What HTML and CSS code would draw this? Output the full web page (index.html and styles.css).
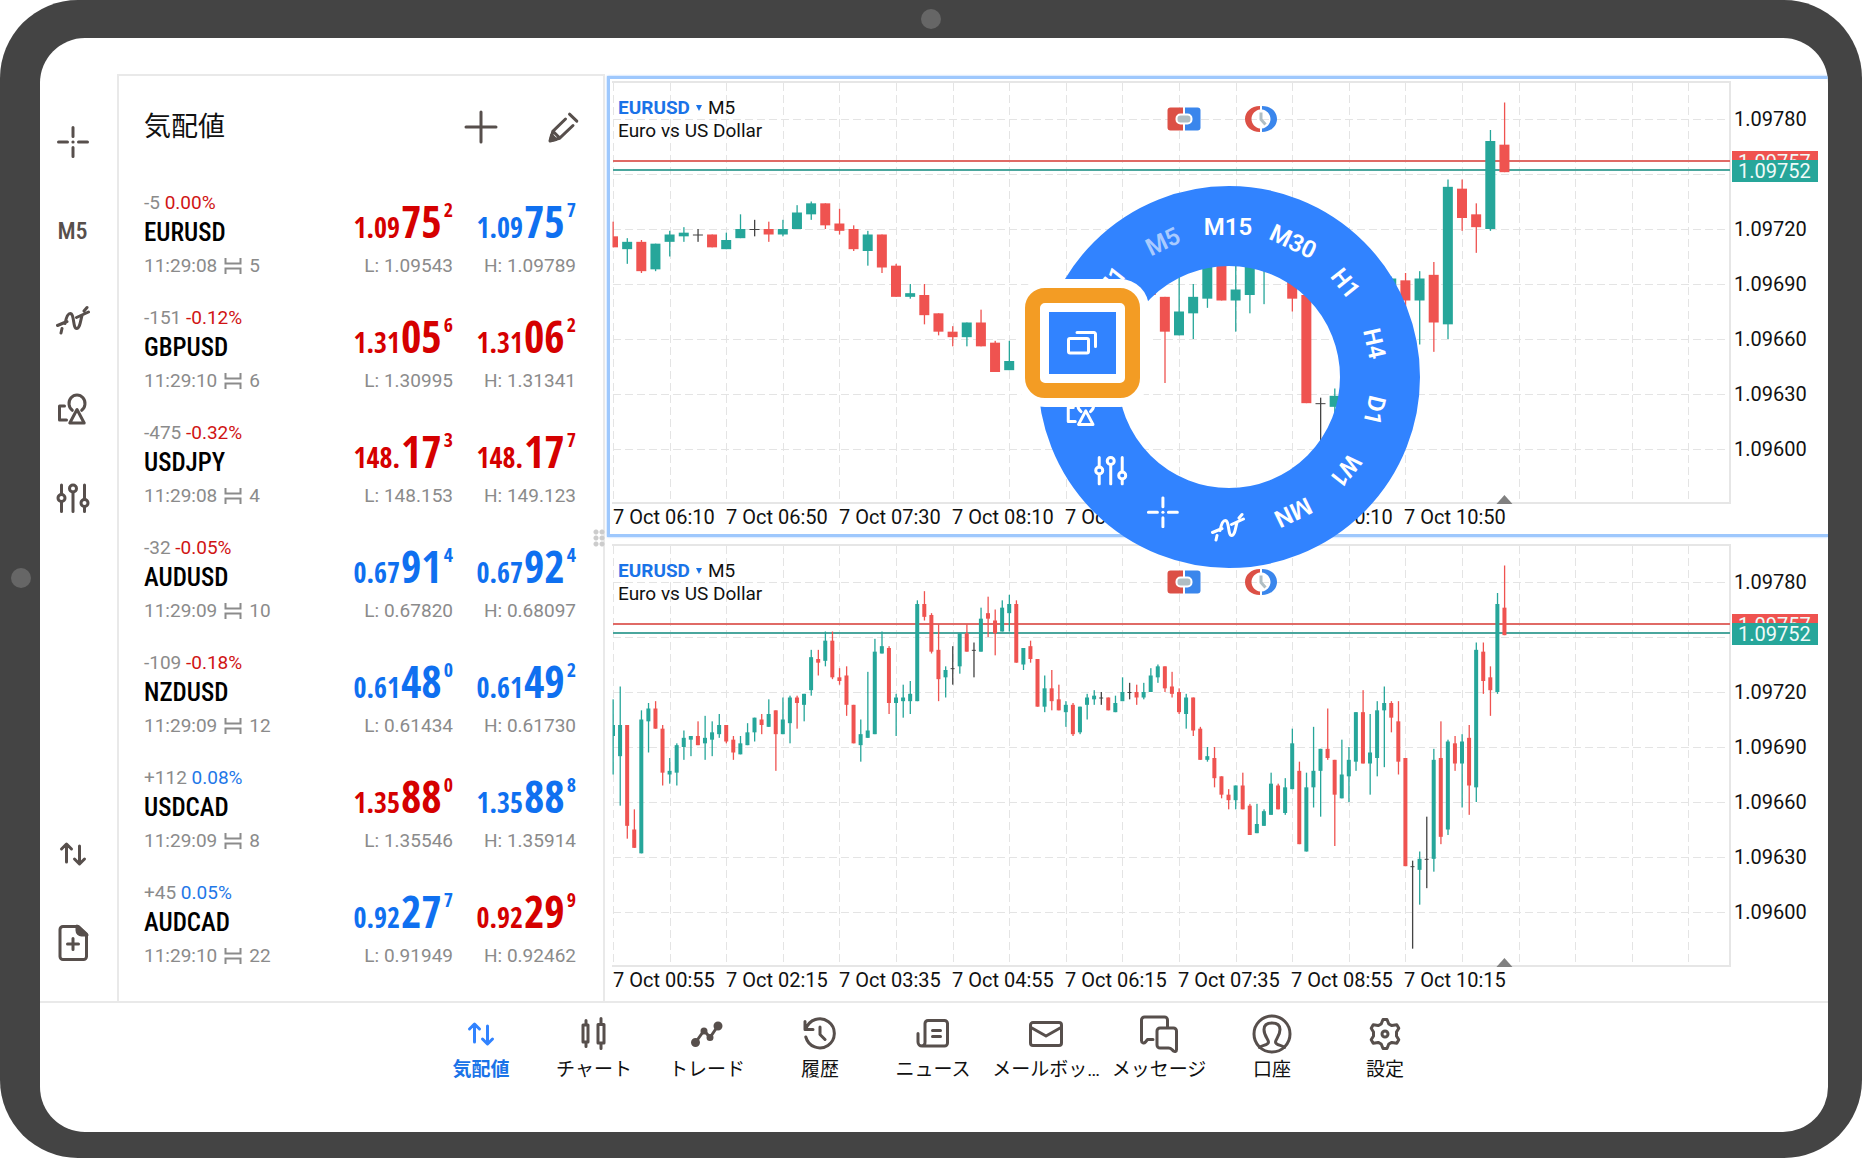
FILE: index.html
```html
<!DOCTYPE html>
<html lang="ja">
<head>
<meta charset="utf-8">
<meta name="viewport" content="width=device-width, initial-scale=1">
<title>気配値</title>
<link rel="stylesheet" href="styles.css">
</head>
<body>
<svg class="sprite" aria-hidden="true">
  <symbol id="i-cross" viewBox="0 0 32 32"><path d="M16 1.500v9M16 21.500v9M1.500 16h9M21.500 16h9"/><path d="M15.900 16h.2"/></symbol>
  <symbol id="i-wave" viewBox="0 0 34 30"><path d="M1.500 20.500 11 16.500M20.500 12.500 32.500 7M5 28l1-4.500M9 18.500C10.500 11 12 8.500 14.200 8.500c4.300 0 2.500 15 6.500 15 3.300 0 3.800-8 5.300-13M28 6l3-3.500"/></symbol>
  <symbol id="i-shapes" viewBox="0 0 32 32"><path d="M7.500 13H2.500v14h7M15.300 17.300a8 8.500 0 1 1 9.400 0M20 16.500 12.800 30h14.400z"/></symbol>
  <symbol id="i-sliders" viewBox="0 0 34 30"><path d="M5.500 2v9.500M5.500 18.500V28.500M17 9v19.500M28.500 2v14.500M28.500 23.500v5"/><circle cx="5.500" cy="15" r="3.500"/><circle cx="17" cy="5.500" r="3.500"/><circle cx="28.500" cy="20" r="3.500"/></symbol>
  <symbol id="i-updown" viewBox="0 0 28 26"><path d="M7.500 3.500v17.500M2.500 8l5-5 5 5M20.500 5v17.500M15.500 18l5 5 5-5"/></symbol>
  <symbol id="i-file" viewBox="0 0 32 38"><path d="M6 2.500h15.500l8 7.500v22.500a3 3 0 0 1-3 3H6a3 3 0 0 1-3-3v-27a3 3 0 0 1 3-3zM16 14.500v11M10.500 20h11"/><path class="solid" d="M20 2l10 9h-5.500a4.500 4.500 0 0 1-4.500-4.500z"/></symbol>
  <symbol id="i-plus" viewBox="0 0 34 34"><path d="M17 2v30M2 17h30"/></symbol>
  <symbol id="i-pencil" viewBox="0 0 32 32"><path d="M17.500 8 4.800 20.300 2.500 29.500l9.200-2.300L25 14.500M5 20.300l6.500 6.500M21.500 3.200l7.300 7"/><path class="solid" d="M2 30l1.600-6 4.500 4.500z"/></symbol>
  <symbol id="i-spread" viewBox="0 0 18 18"><path d="M1.500 1v5.500h15V1M1.500 17v-5.500h15V17"/></symbol>
  <symbol id="i-windows" viewBox="0 0 32 28"><path d="M4 9.500h17a1.500 1.500 0 0 1 1.500 1.500v11.500A1.500 1.500 0 0 1 21 24H4a1.500 1.500 0 0 1-1.500-1.500V11A1.500 1.500 0 0 1 4 9.500zM11 3.500h17A1.500 1.500 0 0 1 29.500 5v12.500"/></symbol>
  <symbol id="i-candles" viewBox="0 0 32 36"><path d="M5 9h5v17H5zM8 9V4.500M8 26v4.500M20 8.500h6V27h-6zM23 8.500V2.500M23 27v5.500"/></symbol>
  <symbol id="i-trade" viewBox="0 0 36 32"><path d="M6.500 24.500 15 12.500l6 7L29.500 7"/><circle class="solid" cx="6.500" cy="24.500" r="3"/><circle class="solid" cx="29" cy="8" r="3"/><circle class="solid" cx="15" cy="13" r="2"/><circle class="solid" cx="21" cy="19.500" r="2"/></symbol>
  <symbol id="i-history" viewBox="0 0 36 36"><path d="M4 13A14.500 14.500 0 1 1 3.800 21M3 5.500v8h8M18 11v7.500l5 5"/></symbol>
  <symbol id="i-news" viewBox="0 0 36 34"><path d="M13 3.500h16.500a3 3 0 0 1 3 3v19.500a3 3 0 0 1-3 3H7a4 4 0 0 1-4-4v-8.500M10 25V6.500a3 3 0 0 1 3-3M10 25a3.500 3.500 0 0 1-3.500 4M17.500 13.500h8M17.500 19.500h8"/></symbol>
  <symbol id="i-mail" viewBox="0 0 36 30"><path d="M5 3.500h26a2.500 2.500 0 0 1 2.500 2.500v18a2.500 2.500 0 0 1-2.500 2.500H5A2.500 2.500 0 0 1 2.500 24V6A2.500 2.500 0 0 1 5 3.500zM3 8.500l15 8.500 15-8.500"/></symbol>
  <symbol id="i-chat" viewBox="0 0 42 40"><path d="M15 25.500H9.500L7.500 28c-1.500 1.800-4 1.200-4-1.500V6a3 3 0 0 1 3-3h20a3 3 0 0 1 3 3v7M22 14h13.500a3 3 0 0 1 3 3v18.500c0 2-1.500 2.500-3 1.500-1.800-1.500-2.500-3-5-3H22a3 3 0 0 1-3-3V17a3 3 0 0 1 3-3z"/></symbol>
  <symbol id="i-account" viewBox="0 0 42 42"><circle cx="21" cy="21" r="18"/><path d="M8.500 34.500c2-2.500 9-2 9-5.500 0-2.500-4.500-6-4.500-12.500 0-5 3.500-6.500 8-6.500s8 1.500 8 6.500c0 6.500-4.500 10-4.500 12.500 0 3.500 7 3 9 5.500"/></symbol>
  <symbol id="i-gear" viewBox="0 0 34 36"><path d="M15 3.500h4l1.800 4.500 3 1.600 5-.8 2 3.400L28.500 16v4l2.300 3.800-2 3.400-5-.8-3 1.600L19 32.500h-4L13.200 28l-3-1.600-5 .8-2-3.400L5.500 20v-4l-2.300-3.800 2-3.400 5 .8 3-1.600z"/><circle cx="17" cy="18" r="3"/></symbol>
  <symbol id="i-order" viewBox="0 0 34 26"><path fill="#dc5046" d="M3.500 1.500H16v23H3.500a3 3 0 0 1-3-3v-17a3 3 0 0 1 3-3z"/><path fill="#3a86ec" d="M18 1.500h12.500a3 3 0 0 1 3 3v17a3 3 0 0 1-3 3H18z"/><rect x="9.500" y="8.500" width="15" height="9" rx="4" fill="#b0bec3" stroke="#fff" stroke-width="2"/></symbol>
  <symbol id="i-clock" viewBox="0 0 34 28"><path fill="#dc5046" d="M16 1C7 1 1 7 1 14s6 13 15 13v-3.500C11.500 23 7.500 19 7.500 14S11.500 5 16 4.500z"/><path fill="#3a86ec" d="M18 1c9 0 15 6 15 13s-6 13-15 13v-3.500c4.500-.5 8.500-4.500 8.500-9.500S22.500 5 18 4.500z"/><path fill="none" stroke="#b0bec3" stroke-width="3" d="M17 7.500v7l4.500 5"/></symbol>
</svg>

<div class="tablet">
  <i class="camera camera-top"></i>
  <i class="camera camera-side"></i>
  <div class="screen">
    <div class="workspace">
      <nav class="rail" aria-label="ツール">
        <button aria-label="十字カーソル"><svg class="ico w32 h32"><use href="#i-cross"/></svg></button>
        <button>M5</button>
        <button aria-label="インディケータ"><svg class="ico w34 h30"><use href="#i-wave"/></svg></button>
        <button aria-label="オブジェクト"><svg class="ico w32 h32"><use href="#i-shapes"/></svg></button>
        <button aria-label="チャート設定"><svg class="ico w34 h30"><use href="#i-sliders"/></svg></button>
        <button class="push" aria-label="気配値"><svg class="ico w28 h26"><use href="#i-updown"/></svg></button>
        <button aria-label="新規注文"><svg class="ico w32 h38"><use href="#i-file"/></svg></button>
      </nav>

      <section class="watch">
        <header class="watch-head">
          <h1>気配値</h1>
          <button aria-label="追加"><svg class="ico w34 h34"><use href="#i-plus"/></svg></button>
          <button aria-label="編集"><svg class="ico w32 h32"><use href="#i-pencil"/></svg></button>
        </header>
        <ul class="quotes" id="quotes"></ul>
        <i class="grip"></i>
      </section>

      <div class="charts">
        <section class="chart selected" data-from="63" data-step="4" data-body="10">
          <div class="plot">
            <svg class="canvas"></svg>
            <div class="legend"><a href="#symbol">EURUSD</a><i class="caret"></i>M5<br>Euro vs US Dollar</div>
            <div class="quick">
              <button aria-label="注文"><svg class="w34 h26"><use href="#i-order"/></svg></button>
              <button aria-label="時間"><svg class="w34 h28"><use href="#i-clock"/></svg></button>
            </div>
          </div>
          <ol class="prices"><li>1.09780</li><li><span class="tag ask">1.09757</span><span class="tag bid">1.09752</span></li><li>1.09720</li><li>1.09690</li><li>1.09660</li><li>1.09630</li><li>1.09600</li></ol>
          <ol class="times"><li>7 Oct 06:10</li><li>7 Oct 06:50</li><li>7 Oct 07:30</li><li>7 Oct 08:10</li><li>7 Oct 08:50</li><li>7 Oct 09:30</li><li>7 Oct 10:10</li><li>7 Oct 10:50</li></ol>
        </section>
        <section class="chart" data-from="0" data-step="8" data-body="4">
          <div class="plot">
            <svg class="canvas"></svg>
            <div class="legend"><a href="#symbol">EURUSD</a><i class="caret"></i>M5<br>Euro vs US Dollar</div>
            <div class="quick">
              <button aria-label="注文"><svg class="w34 h26"><use href="#i-order"/></svg></button>
              <button aria-label="時間"><svg class="w34 h28"><use href="#i-clock"/></svg></button>
            </div>
          </div>
          <ol class="prices"><li>1.09780</li><li><span class="tag ask">1.09757</span><span class="tag bid">1.09752</span></li><li>1.09720</li><li>1.09690</li><li>1.09660</li><li>1.09630</li><li>1.09600</li></ol>
          <ol class="times"><li>7 Oct 00:55</li><li>7 Oct 02:15</li><li>7 Oct 03:35</li><li>7 Oct 04:55</li><li>7 Oct 06:15</li><li>7 Oct 07:35</li><li>7 Oct 08:55</li><li>7 Oct 10:15</li></ol>
        </section>

        <div class="radial" id="radial"></div>
        <div class="spotlight"><button aria-label="ウィンドウ"><svg class="ico w32 h28"><use href="#i-windows"/></svg></button></div>
      </div>
    </div>

    <nav class="tabs">
      <a href="#quotes" class="active"><span><svg class="ico w28 h26"><use href="#i-updown"/></svg></span>気配値</a>
      <a href="#chart"><span><svg class="ico w32 h36"><use href="#i-candles"/></svg></span>チャート</a>
      <a href="#trade"><span><svg class="ico w36 h32"><use href="#i-trade"/></svg></span>トレード</a>
      <a href="#history"><span><svg class="ico w36 h36"><use href="#i-history"/></svg></span>履歴</a>
      <a href="#news"><span><svg class="ico w36 h34"><use href="#i-news"/></svg></span>ニュース</a>
      <a href="#mail"><span><svg class="ico w36 h30"><use href="#i-mail"/></svg></span>メールボッ…</a>
      <a href="#chat"><span><svg class="ico w42 h40"><use href="#i-chat"/></svg></span>メッセージ</a>
      <a href="#account"><span><svg class="ico w42 h42"><use href="#i-account"/></svg></span>口座</a>
      <a href="#settings"><span><svg class="ico w34 h36"><use href="#i-gear"/></svg></span>設定</a>
    </nav>
  </div>
</div>
<script src="app.js"></script>
</body>
</html>
```
FILE: styles.css
```css
* { box-sizing: border-box; }
body {
  margin: 0;
  background: #fff;
  color: #111;
  font: 400 19px/24px Roboto, "Noto Sans CJK JP", sans-serif;
}
button {
  display: flex;
  align-items: center;
  justify-content: center;
  padding: 0;
  border: 0;
  background: none;
  color: inherit;
  font: inherit;
  cursor: pointer;
}
a { color: inherit; text-decoration: none; }
ul, ol { margin: 0; padding: 0; list-style: none; }
svg { display: block; flex: none; }
.sprite { position: absolute; width: 0; height: 0; }
.ico { fill: none; stroke: currentColor; stroke-width: 3; stroke-linecap: round; stroke-linejoin: round; }
.solid { fill: currentColor; }
.w28 { width: 28px; } .w32 { width: 32px; } .w34 { width: 34px; } .w36 { width: 36px; } .w42 { width: 42px; }
.h26 { height: 26px; } .h28 { height: 28px; } .h30 { height: 30px; } .h32 { height: 32px; } .h34 { height: 34px; }
.h36 { height: 36px; } .h38 { height: 38px; } .h40 { height: 40px; } .h42 { height: 42px; }

/* device */
.tablet {
  position: relative;
  display: flex;
  min-height: 100vh;
  padding: 38px 34px 26px 40px;
  border-radius: 78px;
  background: #444;
}
.camera { position: absolute; width: 20px; height: 20px; border-radius: 50%; background: #666; }
.camera-top { top: 9px; left: calc(50% - 10px); }
.camera-side { left: 11px; top: calc(50% - 11px); }
.screen {
  flex: 1;
  min-width: 0;
  display: flex;
  flex-direction: column;
  padding-top: 36px;
  border-radius: 45px;
  background: #fff;
  overflow: hidden;
}
.workspace { flex: 1; display: flex; }

/* left tool rail */
.rail {
  width: 77px;
  display: flex;
  flex-direction: column;
  padding: 23px 12px 14px 0;
  color: #574f4c;
  font-weight: 500;
  font-size: 24px;
  font-family: "Roboto Condensed", Roboto, sans-serif;
}
.rail button { height: 89px; }
.rail .push { margin-top: auto; }

/* quotes */
.watch {
  position: relative;
  width: 488px;
  border: solid #e9e9e9;
  border-width: 2px 2px 0;
  padding: 0 27px 18px 25px;
}
.watch-head { display: flex; align-items: center; height: 102px; color: #574f4c; }
.watch-head h1 { flex: 1; margin: 0; color: #111; font-size: 27px; font-weight: 400; }
.watch-head button { width: 34px; height: 34px; }
.watch-head button + button { width: 32px; margin-left: 50px; margin-right: -4px; }
.quote {
  display: flex;
  height: 115px;
  padding-top: 13px;
  color: #8b8b8b;
}
.quote-main { flex: 1; }
.quote-main b {
  display: block;
  color: #000;
  font: 500 25px/36px "Roboto Condensed", Roboto, sans-serif;
}
.meta { display: flex; align-items: center; gap: 7px; height: 30px; }
.meta .ico { width: 18px; height: 18px; stroke-width: 2; stroke-linecap: butt; stroke-linejoin: miter; }
.side { width: 123px; text-align: right; line-height: 30px; }
.price {
  height: 60px;
  line-height: 60px;
  font-family: "Open Sans Condensed", "Roboto Condensed", sans-serif;
  font-weight: 700;
  font-size: 28px;
  white-space: nowrap;
}
.price b { font-size: 44px; margin: 0 2px 0 1px; }
.price sup { font-size: 20px; line-height: 0; vertical-align: 21px; }
.down { color: #d50000; }
.up { color: #0f70f0; }
.quote-main .down { color: #d01414; }
.quote-main .up { color: #1f78e8; }
.grip {
  position: absolute;
  right: -2px;
  top: 453px;
  width: 12px;
  height: 18px;
  background: radial-gradient(circle at center, #ccc 2px, transparent 3px) 0 0 / 6px 6px;
}

/* charts */
.charts { position: relative; flex: 1; min-width: 0; padding: 2px 0 0 2px; }
.chart {
  display: grid;
  grid-template-columns: minmax(0, 1fr) 97px;
  padding: 2px 0 0 2px;
  border: 3px solid transparent;
  border-right: 0;
}
.chart.selected { border-color: #9ec8fd; box-shadow: 0 0 2px #9ec8fd; margin-bottom: 2px; }
.plot { position: relative; border: 2px solid #e6e6e6; border-left: 0; height: 423px; }
.canvas { width: 100%; height: 100%; overflow: visible; }
.grid { stroke: #e4e4e4; stroke-width: 1; stroke-dasharray: 8 4; }
.legend { position: absolute; left: 6px; top: 13px; line-height: 23px; }
.legend a { color: #1a73e8; font-weight: 700; }
.caret {
  display: inline-block;
  margin: 0 6px 3px;
  border: solid transparent;
  border-width: 6px 3px 0;
  border-top-color: #1a73e8;
}
.quick { position: absolute; left: 555px; top: 22px; display: flex; align-items: center; gap: 43px; }
.prices { padding-top: 11px; font-size: 20px; }
.prices li { position: relative; height: 55px; line-height: 55px; padding-left: 3px; }
.tag {
  position: absolute;
  left: 1px;
  width: 86px;
  padding-left: 6px;
  line-height: 22px;
  color: #effaf8;
}
.ask { top: 4px; background: #ef5350; }
.bid { top: 13px; background: #26a69a; }
.times { grid-column: 1 / 3; display: flex; height: 30px; line-height: 27px; font-size: 20px; padding-left: 1px; }
.times li { flex: 0 0 113px; white-space: nowrap; }

/* radial timeframe menu */
.radial {
  position: absolute;
  left: 433px;
  top: 112px;
  width: 382px;
  height: 382px;
  border: 80px solid #3183ff;
  border-radius: 50%;
  color: #fff;
  font-size: 24px;
  font-weight: 600;
}
.radial button {
  position: absolute;
  left: 50%;
  top: 50%;
  width: 60px;
  height: 40px;
  margin: -20px 0 0 -31px;
}
.radial .current { color: #a9cbff; }
.spotlight {
  position: absolute;
  left: 420px;
  top: 214px;
  width: 115px;
  height: 110px;
  padding: 9px;
  border: 15px solid #f39c24;
  border-radius: 20px;
  background: #fff;
  box-shadow: 0 0 0 9px #fff;
}
.spotlight button { width: 100%; height: 100%; background: #3183ff; color: #fff; }
.spotlight .ico { margin-right: 2px; }

/* bottom tabs */
.tabs {
  display: flex;
  justify-content: center;
  height: 131px;
  padding: 9px 2px 0 0;
  border-top: 2px solid #e9e9e9;
}
.tabs a { width: 113px; text-align: center; white-space: nowrap; }
.tabs span { display: flex; align-items: center; justify-content: center; height: 44px; margin-bottom: 2px; color: #574f4c; }
.tabs .active { color: #1a73e8; font-weight: 700; }
.tabs .active span { color: #3183ff; }
```
FILE: app.js
```js
// Quotes: symbol, change, percent, time, spread, bid, ask, low, high, bid/ask direction
const quotes = [
  ["EURUSD", "-5", "0.00%", "11:29:08", 5, "1.09752", "1.09757", "1.09543", "1.09789", "du", "d"],
  ["GBPUSD", "-151", "-0.12%", "11:29:10", 6, "1.31056", "1.31062", "1.30995", "1.31341", "dd", "d"],
  ["USDJPY", "-475", "-0.32%", "11:29:08", 4, "148.173", "148.177", "148.153", "149.123", "dd", "d"],
  ["AUDUSD", "-32", "-0.05%", "11:29:09", 10, "0.67914", "0.67924", "0.67820", "0.68097", "uu", "d"],
  ["NZDUSD", "-109", "-0.18%", "11:29:09", 12, "0.61480", "0.61492", "0.61434", "0.61730", "uu", "d"],
  ["USDCAD", "+112", "0.08%", "11:29:09", 8, "1.35880", "1.35888", "1.35546", "1.35914", "du", "u"],
  ["AUDCAD", "+45", "0.05%", "11:29:10", 22, "0.92277", "0.92299", "0.91949", "0.92462", "ud", "u"]
];
const dir = d => (d === "u" ? "up" : "down");
const price = (p, d) =>
  `<div class="price ${dir(d)}">${p.slice(0, 4)}<b>${p.slice(4, 6)}</b><sup>${p.slice(6)}</sup></div>`;
document.getElementById("quotes").innerHTML = quotes.map(q => `
  <li class="quote">
    <div class="quote-main">${q[1]} <span class="${dir(q[10])}">${q[2]}</span><b>${q[0]}</b>
      <div class="meta">${q[3]}<svg class="ico"><use href="#i-spread"/></svg>${q[4]}</div></div>
    <div class="side">${price(q[5], q[9][0])}L: ${q[7]}</div>
    <div class="side">${price(q[6], q[9][1])}H: ${q[8]}</div>
  </li>`).join("");

// Five-minute bars: type (g up, r down, d doji), high, body top, body bottom, low; points above 1.09000
const bars = `g716 702 696 675,g723 702 685 658,r702 702 647 640,r656 645 635 635,g710 705 632 632,g714 711 704 687,
r715 711 700 700,r702 700 676 669,g684 677 675 670,g692 691 676 669,g699 695 690 683,g696 696 694 685,r704 696 691 691,
g707 695 692 683,g704 698 694 685,g708 702 697 695,r702 702 693 692,r696 694 687 683,g696 692 686 686,g703 698 691 691,
g706 706 698 693,r708 705 702 697,g716 708 701 701,r710 710 697 677,g717 705 697 697,g718 717 703 692,r718 717 714 700,
g719 719 713 704,g743 739 721 718,r743 738 736 729,g753 748 737 734,r753 748 728 727,r733 728 726 724,r734 729 713 707,
r713 713 692 692,g705 697 691 682,g731 699 695 695,g749 742 697 697,g753 745 741 741,r745 744 714 708,g719 717 714 696,
g724 717 715 706,g726 719 715 708,g770 768 715 715,r775 768 761 759,r763 762 742 741,r757 743 727 715,g734 732 728 717,
d745 733 733 724,g752 752 734 730,r757 752 742 742,d747 743 743 728,g766 760 742 742,r772 763 760 750,r765 759 752 740,
g770 766 753 753,g773 768 763 753,r770 768 736 736,g744 744 735 732,r748 745 738 736,r738 738 712 712,g729 722 712 709,
r732 722 715 710,r724 716 710 710,g715 713 709 701,r714 713 697 696,g712 712 698 697,g719 717 713 705,g721 718 716 713,
d720 717 717 713,r717 717 710 710,g718 714 709 709,g728 720 715 715,d725 720 720 716,r724 720 717 713,g725 720 717 716,
g733 729 720 720,g735 734 728 725,r734 734 722 720,r731 723 719 717,r722 720 709 708,g719 717 708 700,r717 717 699 696,
r701 700 683 683,g690 685 683 682,r690 684 673 668,r674 674 664 662,r667 664 661 656,g669 669 661 656,r676 669 656 656,
r659 658 642 642,g659 648 643 643,g656 655 647 647,g676 670 653 653,r670 669 656 656,g673 668 654 653,g700 692 667 667,
r682 677 637 637,g676 668 633 633,g701 677 668 657,g689 689 677 652,r711 689 684 683,r683 683 664 636,g694 675 662 662,
g690 683 674 660,g709 709 682 677,r721 709 681 681,g708 687 681 664,g715 710 684 674,g723 714 710 679,r715 714 706 698,
r715 704 682 675,r684 684 625 625,d628 625 625 580,g633 629 623 604,d652 629 629 613,g689 683 629 622,r704 684 641 637,
g694 693 645 642,r696 692 681 677,g697 693 681 657,r702 695 669 653,g747 743 668 660,r747 742 726 719,r734 728 721 707,
g774 768 720 719,r789 766 751 751`.split(",").map(s => {
  s = s.trim();
  return [s[0], ...s.slice(1).split(" ").map(Number)];
});
const colors = { g: "#26a69a", r: "#ef5350", d: "#444" };
const CELL = 56.6;
const y = p => 36 + (780 - p) * 11 / 6;

document.querySelectorAll(".chart").forEach(chart => {
  const { from, step, body } = chart.dataset;
  const svg = chart.querySelector(".canvas");
  const pitch = CELL / step;
  const w = +body;
  let out = "";
  for (let x = 1; x < svg.clientWidth; x += CELL)
    out += `<line class="grid" x1="${Math.round(x)+.5}" x2="${Math.round(x)+.5}" y1="0" y2="100%"/>`;
  for (let p = 780; p >= 600; p -= 30)
    out += `<line class="grid" x1="1" x2="100%" y1="${Math.round(y(p))+.5}" y2="${Math.round(y(p))+.5}"/>`;
  out += `<rect x="1" y="77" width="100%" height="2" fill="#e06a66"/><rect x="1" y="86" width="100%" height="2" fill="#4aa69d"/>`;
  bars.slice(+from).forEach(([t, hi, top, bot, lo], i) => {
    const x = 1 + i * pitch;
    const cut = i === 0 ? 0 : w / 2;
    const h = t === "d" ? 1 : Math.max(y(bot) - y(top), 2);
    out += `<rect x="${x - .5}" y="${y(hi)}" width="1.300" height="${y(lo) - y(hi)}" fill="${colors[t]}"/>` +
      `<rect x="${x - cut}" y="${y(top)}" width="${cut + w / 2}" height="${h}" fill="${colors[t]}"/>`;
  });
  const last = 1 + 63 * CELL / 4;
  out += `<path d="M${last - 8} 421l8-9 8 9z" fill="#808080"/>`;
  svg.innerHTML = out;
});

// Radial menu: fourteen slots clockwise from the top; text turns with the ring, icons stay upright
const icon = (id, w, h) => `<svg class="ico w${w} h${h}"><use href="#i-${id}"/></svg>`;
const slots = ["M15", "M30", "H1", "H4", "D1", "W1", "MN", icon("wave", 34, 30), icon("cross", 32, 32),
  icon("sliders", 34, 30), icon("shapes", 32, 32), "", "M1", "M5"];
document.getElementById("radial").innerHTML = slots.map((s, i) => {
  const a = i * 360 / 14;
  const back = s[0] === "<" ? ` rotate(${-a}deg)` : "";
  return s && `<button class="${s === "M5" ? "current" : ""}" style="transform:rotate(${a}deg) translateY(-150px)${back}">${s}</button>`;
}).join("");
```
